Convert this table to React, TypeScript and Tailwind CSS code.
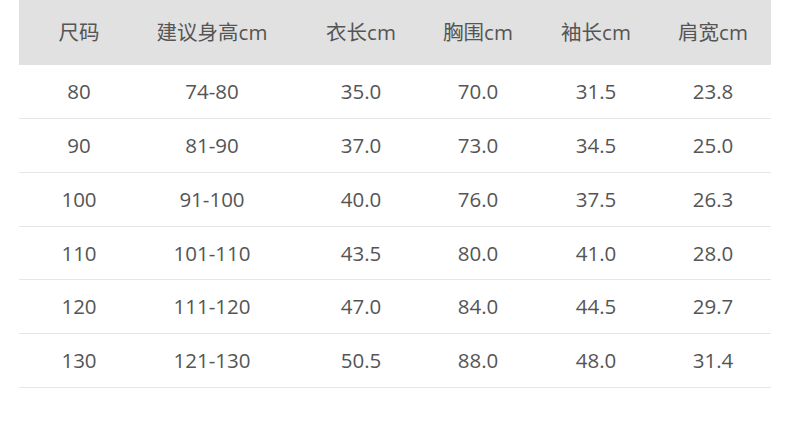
const headers = ["尺码", "建议身高cm", "衣长cm", "胸围cm", "袖长cm", "肩宽cm"];

const rows = [
  ["80", "74-80", "35.0", "70.0", "31.5", "23.8"],
  ["90", "81-90", "37.0", "73.0", "34.5", "25.0"],
  ["100", "91-100", "40.0", "76.0", "37.5", "26.3"],
  ["110", "101-110", "43.5", "80.0", "41.0", "28.0"],
  ["120", "111-120", "47.0", "84.0", "44.5", "29.7"],
  ["130", "121-130", "50.5", "88.0", "48.0", "31.4"],
];

const cols = "grid grid-cols-[120px_146px_152px_82px_154px_99px]";

export default function App() {
  return (
    <div
      className="h-[431px] w-[790px] bg-white px-[19px] text-[#555555]"
      style={{ fontFamily: '"Open Sans", "Noto Sans CJK SC", sans-serif' }}
    >
      <div className={`${cols} h-[65px] items-center bg-[#e1e1e1] text-[20.5px]`}>
        {headers.map((h, i) => (
          <div key={h} className={`text-center ${i === 5 ? "pr-[19px]" : ""}`}>
            {h}
          </div>
        ))}
      </div>
      {rows.map((r) => (
        <div
          key={r[0]}
          className={`${cols} h-[53.85px] items-center border-b border-[#e6e6e6] text-[20.5px]`}
        >
          {r.map((c, i) => (
            <div key={i} className={`text-center ${i === 5 ? "pr-[19px]" : ""}`}>
              {c}
            </div>
          ))}
        </div>
      ))}
    </div>
  );
}
